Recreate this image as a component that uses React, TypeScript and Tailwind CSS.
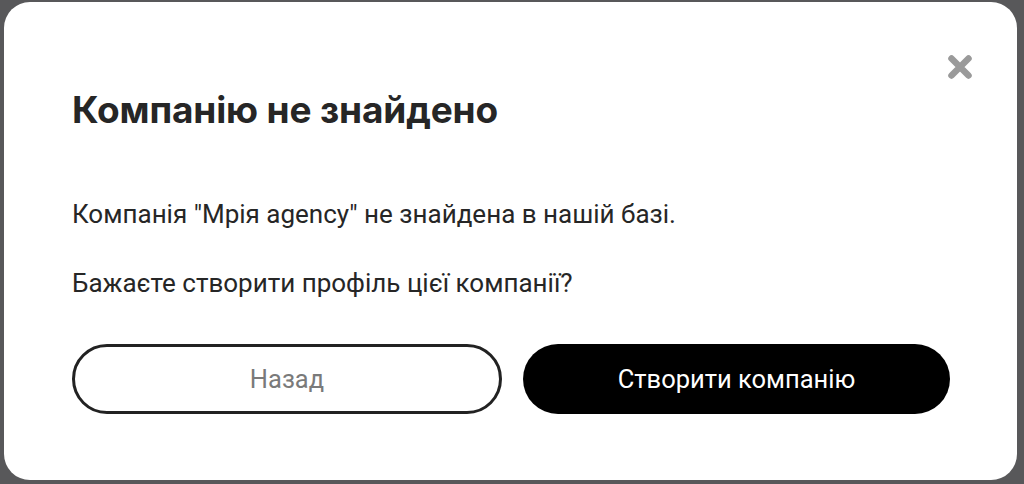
import React from "react";

function CloseIcon() {
  return (
    <svg width="28" height="28" viewBox="0 0 28 28" fill="none" aria-hidden="true">
      <path d="M5.5 5.5L22.5 22.5M22.5 5.5L5.5 22.5" stroke="#9a9a9a" strokeWidth="6.5" strokeLinecap="round" />
    </svg>
  );
}

export default function App() {
  return (
    <div className="w-[1024px] h-[484px] bg-[#58585a] pt-[2px] pl-[4px] overflow-hidden" style={{ fontFamily: "Roboto, 'Noto Sans', sans-serif" }}>
      <div className="relative w-[1013px] h-[478px] bg-white rounded-[26px] pl-[68px] pr-[40px] pt-[86px]">
        <button className="absolute top-[51px] right-[43px]">
          <CloseIcon />
        </button>

        <h1
          className="text-[37px] leading-[44px] font-bold text-[#262626] tracking-[-0.15px]"
          style={{ fontFamily: "Inter, 'Noto Sans', sans-serif" }}
        >
          Компанію не знайдено
        </h1>

        <p className="mt-[68px] text-[26px] leading-[28px] text-[#262626] whitespace-nowrap">
          Компанія "Мрія agency" не знайдена в нашій базі.
        </p>
        <p className="mt-[41px] text-[26px] leading-[28px] text-[#262626] whitespace-nowrap">
          Бажаєте створити профіль цієї компанії?
        </p>

        <div className="mt-[47px] flex gap-[21px]">
          <button className="w-[430px] h-[70px] rounded-full border-[3px] border-[#222] text-[25.5px] text-[#7a7a7a]">
            Назад
          </button>
          <button className="w-[427px] h-[70px] rounded-full bg-black text-[25.5px] text-white">
            Створити компанію
          </button>
        </div>
      </div>
    </div>
  );
}
